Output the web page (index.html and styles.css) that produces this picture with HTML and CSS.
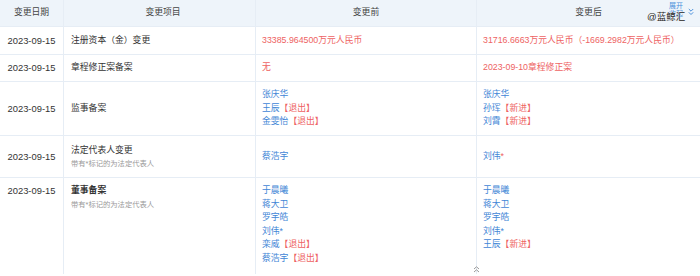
FILE: index.html
```html
<!DOCTYPE html>
<html lang="zh-CN">
<head>
<meta charset="utf-8">
<title>变更记录</title>
<link rel="stylesheet" href="styles.css">
</head>
<body>
<div class="table">
  <div class="row head">
    <div class="cell center">变更日期</div>
    <div class="cell center">变更项目</div>
    <div class="cell center">变更前</div>
    <div class="cell center last">变更后</div>
  </div>
  <div class="row r1">
    <div class="cell center date">2023-09-15</div>
    <div class="cell">注册资本（金）变更</div>
    <div class="cell red">33385.964500万元人民币</div>
    <div class="cell red last">31716.6663万元人民币（-1669.2982万元人民币）</div>
  </div>
  <div class="row r2">
    <div class="cell center date">2023-09-15</div>
    <div class="cell">章程修正案备案</div>
    <div class="cell red">无</div>
    <div class="cell red last">2023-09-10章程修正案</div>
  </div>
  <div class="row r3">
    <div class="cell center date">2023-09-15</div>
    <div class="cell">监事备案</div>
    <div class="cell blue">
      <div>张庆华</div>
      <div>王辰<span class="red">【退出】</span></div>
      <div>金雯怡<span class="red">【退出】</span></div>
    </div>
    <div class="cell blue last">
      <div>张庆华</div>
      <div>孙珲<span class="red">【新进】</span></div>
      <div>刘霄<span class="red">【新进】</span></div>
    </div>
  </div>
  <div class="row r4">
    <div class="cell center date">2023-09-15</div>
    <div class="cell">
      <div class="title">法定代表人变更</div>
      <div class="note">带有*标记的为法定代表人</div>
    </div>
    <div class="cell blue">蔡浩宇</div>
    <div class="cell blue last">
      <div>刘伟<span class="red">*</span></div>
    </div>
  </div>
  <div class="row r5">
    <div class="cell center date">2023-09-15</div>
    <div class="cell">
      <div class="bold">董事备案</div>
      <div class="note">带有*标记的为法定代表人</div>
    </div>
    <div class="cell blue">
      <div>于晨曦</div>
      <div>蒋大卫</div>
      <div>罗宇皓</div>
      <div>刘伟*</div>
      <div>栾威<span class="red">【退出】</span></div>
      <div>蔡浩宇<span class="red">【退出】</span></div>
    </div>
    <div class="cell blue last">
      <div>于晨曦</div>
      <div>蒋大卫</div>
      <div>罗宇皓</div>
      <div>刘伟*</div>
      <div>王辰<span class="red">【新进】</span></div>
    </div>
  </div>
</div>

<div class="expand">
  <span class="expand-text">展开<br>收起</span>
  <svg class="chev-down" width="6" height="8" viewBox="0 0 6 8"><path d="M0.8 1 L3 3.2 L5.2 1 M0.8 4.3 L3 6.5 L5.2 4.3" fill="none" stroke="#4a8fdb" stroke-width="1"/></svg>
</div>
<div class="mark">@蓝鲸汇</div>
<svg class="collapse" width="7" height="7" viewBox="0 0 7 7"><path d="M1 3 L3.5 0.8 L6 3 M1 6 L3.5 3.8 L6 6" fill="none" stroke="#9a9a9a" stroke-width="1"/></svg>
</body>
</html>
```

FILE: styles.css
```css
* { box-sizing: border-box; }
html, body { margin: 0; padding: 0; }
body {
  width: 700px;
  height: 276px;
  overflow: hidden;
  position: relative;
  background: #ffffff;
  font-family: "Liberation Sans", "Noto Sans CJK SC", sans-serif;
  font-size: 8.8px;
  color: #333333;
}
.table { width: 700px; }
.row {
  display: grid;
  grid-template-columns: 64px 192px 221px 223px;
  border-bottom: 1px solid #e6edf5;
}
.cell {
  display: flex;
  flex-direction: column;
  justify-content: center;
  padding: 0 6px;
  line-height: 13.5px;
  border-right: 1px solid #e6edf5;
  white-space: nowrap;
}
.cell.last { border-right: none; }
.cell.center { align-items: center; padding: 0; }
.date { font-size: 9.4px; }
.row .cell:nth-child(2) { padding-left: 7px; }
.head { background: #eef4fa; height: 27px; }
.head .cell { color: #444; }
.r1 { height: 28px; }
.r2 { height: 27px; }
.r3 { height: 54px; }
.r4 { height: 42px; }
.r5 { border-bottom: none; }
.r5 .cell { justify-content: flex-start; padding-top: 6px; padding-bottom: 8px; line-height: 13.6px; }
.r5 .cell.center { justify-content: flex-start; }
.red { color: #ee6363; }
.blue { color: #3f86d6; }
.note { color: #9a9a9a; font-size: 7.3px; line-height: 13px; }
.title { line-height: 13px; }
.bold { font-weight: 600; }
.expand {
  position: absolute;
  left: 669px;
  top: 0;
  display: flex;
  align-items: flex-start;
  gap: 5px;
}
.expand-text {
  color: #4a8fdb;
  font-size: 7px;
  line-height: 8px;
  padding-top: 2px;
}
.chev-down { margin-top: 8px; }
.mark {
  position: absolute;
  left: 647px;
  top: 10px;
  font-size: 9.5px;
  line-height: 14px;
  color: #222;
  text-shadow: 0 0 1px #fff, 0 0 1px #fff;
}
.collapse {
  position: absolute;
  left: 473px;
  top: 266px;
}
```
